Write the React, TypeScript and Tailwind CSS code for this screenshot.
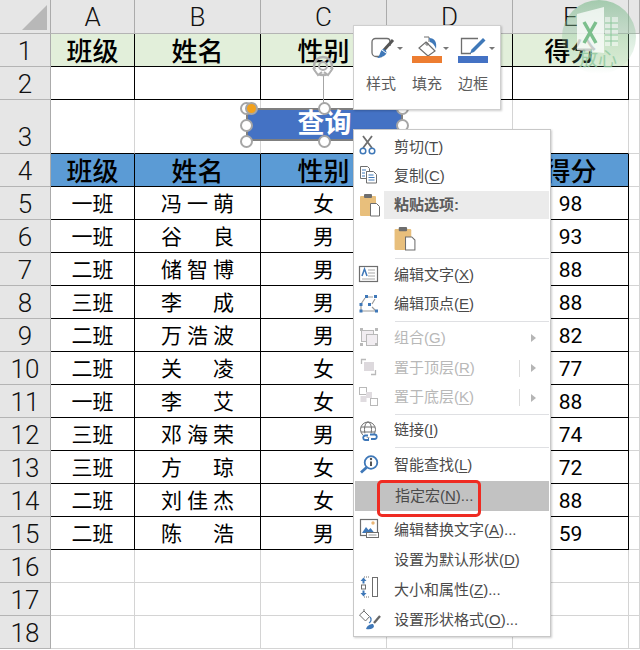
import React from "react";

const CJK = "font-['Liberation_Sans','Noto_Sans_CJK_SC',sans-serif]";

const rows: [string, string, string, string][] = [
  ["一班", "冯一萌", "女", "98"],
  ["一班", "谷良", "男", "93"],
  ["二班", "储智博", "男", "88"],
  ["三班", "李成", "男", "88"],
  ["二班", "万浩波", "男", "82"],
  ["二班", "关凌", "女", "77"],
  ["一班", "李艾", "女", "88"],
  ["三班", "邓海荣", "男", "74"],
  ["三班", "方琼", "女", "72"],
  ["二班", "刘佳杰", "女", "88"],
  ["二班", "陈浩", "男", "59"],
];

function HeadCell({ children, tall, top }: { children?: React.ReactNode; tall?: boolean; top?: boolean }) {
  return (
    <div className={`flex justify-center bg-[#e6e6e6] border-r border-b border-r-[#ababab] border-b-[#b4b4b4] font-['Roboto','Noto_Sans_CJK_SC',sans-serif] font-light text-[26px] text-[#111] leading-[32px] ${tall ? "items-end" : "items-center"} ${top ? "" : "pt-[2px]"}`}>
      {children}
    </div>
  );
}

function Cell({ children, kind }: { children?: React.ReactNode; kind: "black" | "green" | "blue" | "open" | "plain" }) {
  const map = {
    black: "bg-white border-r-black border-b-black pt-[2px]",
    green: "bg-[#e2efda] border-r-black border-b-black font-medium text-[26px] pt-[3px]",
    blue: "bg-[#5b9bd5] border-r-black border-b-black font-medium text-[26px] pt-[3px]",
    open: "bg-white border-r-[#d4d4d4] border-b-black",
    plain: "bg-white border-r-[#d4d4d4] border-b-[#d4d4d4]",
  };
  return (
    <div className={`flex items-center justify-center border-r border-b font-['Roboto','Noto_Sans_CJK_SC',sans-serif] text-black text-[21px] leading-none ${map[kind]}`}>
      {children}
    </div>
  );
}

function Name({ v }: { v: string }) {
  return (
    <span className="flex w-[73px] justify-between">
      {v.split("").map((c, i) => (
        <span key={i}>{c}</span>
      ))}
    </span>
  );
}

function Handle({ x, y }: { x: string; y: string }) {
  return <div className={`absolute w-[13px] h-[13px] rounded-full bg-white border-2 border-[#a6a6a6] ${x} ${y}`} />;
}

const G = "#6e6e6e";
const B = "#3f78b8";
const L = "#b9b9b9";

function Ico({ children }: { children: React.ReactNode }) {
  return (
    <svg width="30" height="30" viewBox="0 0 30 30" fill="none" className="absolute left-0 top-0">
      {children}
    </svg>
  );
}

const PasteShape = () => (
  <g>
    <rect x="0" y="2" width="16" height="20" fill="#e8bf7c" rx="1" />
    <rect x="4" y="0" width="8" height="4" fill="#6e6e6e" rx="1" />
    <path d="M10.5 9.5h6l3 3v9.5h-9z" fill="#fff" stroke="#6e6e6e" />
  </g>
);

const icons: Record<string, React.ReactNode> = {
  cut: (
    <Ico>
      <path d="M9 4l9 12M18 4L9 16" stroke={G} strokeWidth="1.8" />
      <circle cx="9" cy="19" r="2.8" stroke={B} strokeWidth="1.5" />
      <circle cx="18" cy="19" r="2.8" stroke={B} strokeWidth="1.5" />
    </Ico>
  ),
  copy: (
    <Ico>
      <path d="M6.5 4.500h7l2 2v3h-3v7h-6z" fill="#fff" stroke={G} />
      <path d="M12.500 9.500h7l3 3v8.500h-10z" fill="#fff" stroke={G} />
      <path d="M8 8h4M8 11h3M8 14h3" stroke={B} />
      <path d="M14.500 13h5M14.500 15.500h6M14.500 18h6" stroke={B} />
    </Ico>
  ),
  text: (
    <Ico>
      <rect x="5.500" y="6.500" width="18" height="15" stroke={G} strokeWidth="1.200" fill="#fff" />
      <path d="M8 16l2.500-7 2.500 7" stroke={B} strokeWidth="1.500" />
      <path d="M14 10h7M14 13h7M14 16h7M8 19h13" stroke="#a9a9a9" />
    </Ico>
  ),
  vertex: (
    <Ico>
      <path d="M7 16v5h15M7 14l4-6M13 7h6M21 9l-3 5M18 17l3 3" stroke="#9a9a9a" strokeWidth="1.200" />
      <rect x="5.500" y="13" width="3" height="3" fill={B} />
      <rect x="11" y="5" width="3" height="3" fill={B} />
      <rect x="20" y="5" width="3" height="3" fill={B} />
      <rect x="14" y="13" width="3" height="3" fill={B} />
      <rect x="5.500" y="19.500" width="3" height="3" fill={B} />
      <rect x="21" y="19.500" width="3" height="3" fill={B} />
    </Ico>
  ),
  group: (
    <Ico>
      <rect x="7.500" y="7.500" width="12" height="11" stroke={L} fill="#f1edf1" />
      <rect x="12.500" y="11.500" width="11" height="11" stroke={L} fill="#f1edf1" />
      <rect x="6" y="5" width="3" height="3" fill={L} />
      <rect x="21" y="5" width="3" height="3" fill={L} />
      <rect x="6" y="20" width="3" height="3" fill={L} />
      <rect x="21" y="20" width="3" height="3" fill={L} />
    </Ico>
  ),
  front: (
    <Ico>
      <path d="M12 6.500H7.500V11M17 21.500h4.500V17" stroke={L} strokeWidth="1.300" />
      <rect x="10" y="9" width="10" height="9" fill="#ddd9dd" />
    </Ico>
  ),
  back: (
    <Ico>
      <rect x="5.500" y="4.500" width="7" height="7" stroke={L} fill="#fff" />
      <rect x="12" y="9" width="6" height="6" fill="#e0dce0" />
      <rect x="6.500" y="13" width="6" height="6" fill="#e0dce0" />
      <rect x="16.500" y="15.500" width="7" height="7" stroke={L} fill="#fff" />
    </Ico>
  ),
  link: (
    <Ico>
      <circle cx="14" cy="13.500" r="7.500" stroke={G} />
      <ellipse cx="14" cy="13.500" rx="3.500" ry="7.500" stroke={G} />
      <path d="M7 11h14M7 16h14" stroke={G} />
      <rect x="10" y="19" width="9" height="5" rx="2.500" stroke="#fff" strokeWidth="4" />
      <path d="M14 19.500h-3a2.300 2.300 0 0 0 0 4.500h4M15 23h-1M16 18.500h5a2.300 2.300 0 0 1 0 4.500h-4" stroke={B} strokeWidth="1.800" />
    </Ico>
  ),
  info: (
    <Ico>
      <circle cx="17" cy="13.500" r="6.300" stroke={B} strokeWidth="1.800" />
      <path d="M12.500 18.500L7 23.500" stroke={B} strokeWidth="2.800" />
      <path d="M17 12.500v4.500" stroke="#555" strokeWidth="2" />
      <circle cx="17" cy="10" r="1.200" fill="#555" />
    </Ico>
  ),
  alt: (
    <Ico>
      <rect x="6.500" y="4.500" width="17" height="16" stroke={G} strokeWidth="1.200" fill="#fff" />
      <path d="M8 18l4-6 2.500 3 2-2 4 5z" fill={B} />
      <circle cx="19" cy="8" r="1.700" fill="#eab676" />
      <rect x="12.500" y="17.500" width="12" height="5" stroke={G} fill="#fff" />
      <path d="M14.500 20h8" stroke="#999" />
    </Ico>
  ),
  size: (
    <Ico>
      <rect x="18.500" y="2.500" width="5" height="19" stroke={G} fill="#fff" />
      <path d="M10 2h6M10 22h6" stroke={G} strokeDasharray="1 1" />
      <path d="M9.500 2.500l-3 3.500h2v2.500h2V6h2zM9.500 21.500l-3-3.500h2v-2.500h2V18h2z" fill={B} />
      <rect x="7.500" y="10" width="4" height="4" stroke={G} />
    </Ico>
  ),
  format: (
    <Ico>
      <path d="M5.500 10l4.500-4 5.500 5.500-4 4.500z" fill="#fff" stroke={G} />
      <path d="M10 6v-2" stroke={G} />
      <path d="M16 12c2 2 1 5-1 6" stroke={B} strokeWidth="1.300" />
      <path d="M26 11l-6 7" stroke="#666" strokeWidth="2.300" />
      <path d="M12 24c1-4 5-5 7-5l1 2c0 2-3 4-8 3z" fill={B} />
    </Ico>
  ),
};

function Label({ a, u, b, off }: { a: string; u: string; b: string; off?: boolean }) {
  return (
    <span className={`mb-[2px] text-[15px] leading-none whitespace-nowrap ${off ? "text-[#b8b8b8]" : "text-[#4a4a4a]"}`}>
      {a}(<span className="underline underline-offset-2">{u}</span>){b}
    </span>
  );
}

function Item({
  h,
  icon,
  a,
  u,
  b = "",
  off,
  sub,
  tick,
  active,
}: {
  h: string;
  icon?: string;
  a: string;
  u: string;
  b?: string;
  off?: boolean;
  sub?: boolean;
  tick?: boolean;
  active?: boolean;
}) {
  return (
    <div className={`relative flex items-center pl-[40px] ${h} ${active ? "bg-[#c2c2c2] mr-px ml-px pl-[39px]" : ""}`}>
      {icon ? icons[icon] : null}
      <Label a={a} u={u} b={b} off={off} />
      {tick ? <div className="ml-auto mr-[11px] h-[17px] w-px bg-[#dcdcdc]" /> : null}
      {sub ? (
        <div className={`${tick ? "" : "ml-auto"} mr-[14px] h-0 w-0 border-y-[4px] border-l-[5px] border-y-transparent border-l-[#b5b5b5]`} />
      ) : null}
    </div>
  );
}

function Sep({ h = "h-[3px]" }: { h?: string }) {
  return (
    <div className={`${h} flex items-center pl-[41px] pr-[1px]`}>
      <div className="h-px w-full bg-[#dfe0e3]" />
    </div>
  );
}

function ToolBtn({ label, children }: { label: string; children: React.ReactNode }) {
  return (
    <div className="flex w-[46px] flex-col items-center">
      <svg width="46" height="28" viewBox="0 0 46 28" fill="none">
        {children}
        <path d="M39 11h6l-3 3z" fill="#777" />
      </svg>
      <span className="mt-[11px] text-[15px] leading-[18px] text-[#5c5c5c]">{label}</span>
    </div>
  );
}

export default function App() {
  const cols = ["A", "B", "C", "D", "E", ""];
  return (
    <div className={`relative h-[650px] w-[640px] overflow-hidden bg-white ${CJK}`}>
      <div className="grid grid-cols-[51px_84px_126px_126px_126px_116px_11px] grid-rows-[34px_33px_33px_54px_repeat(15,33px)]">
        <div className="relative bg-[#e6e6e6] border-r border-b border-r-[#ababab] border-b-[#b4b4b4]">
          <svg width="50" height="33" className="absolute left-0 top-0">
            <path d="M47 5v25H22z" fill="#b8b8b8" />
          </svg>
        </div>
        {cols.map((c, i) => (
          <HeadCell key={i} top>{c}</HeadCell>
        ))}

        <HeadCell>1</HeadCell>
        <Cell kind="green">班级</Cell>
        <Cell kind="green">姓名</Cell>
        <Cell kind="green">性别</Cell>
        <Cell kind="green" />
        <Cell kind="green">得分</Cell>
        <Cell kind="plain" />

        <HeadCell>2</HeadCell>
        <Cell kind="black" />
        <Cell kind="black" />
        <Cell kind="black" />
        <Cell kind="black" />
        <Cell kind="black" />
        <Cell kind="plain" />

        <HeadCell tall>3</HeadCell>
        <Cell kind="open" />
        <Cell kind="open" />
        <Cell kind="open" />
        <Cell kind="open" />
        <Cell kind="open" />
        <Cell kind="plain" />

        <HeadCell>4</HeadCell>
        <Cell kind="blue">班级</Cell>
        <Cell kind="blue">姓名</Cell>
        <Cell kind="blue">性别</Cell>
        <Cell kind="blue" />
        <Cell kind="blue">得分</Cell>
        <Cell kind="plain" />

        {rows.map((r, i) => (
          <React.Fragment key={i}>
            <HeadCell>{i + 5}</HeadCell>
            <Cell kind="black">{r[0]}</Cell>
            <Cell kind="black">
              <Name v={r[1]} />
            </Cell>
            <Cell kind="black">{r[2]}</Cell>
            <Cell kind="black" />
            <Cell kind="black">{r[3]}</Cell>
            <Cell kind="plain" />
          </React.Fragment>
        ))}

        {[16, 17, 18].map((n) => (
          <React.Fragment key={n}>
            <HeadCell>{n}</HeadCell>
            <Cell kind="plain" />
            <Cell kind="plain" />
            <Cell kind="plain" />
            <Cell kind="plain" />
            <Cell kind="plain" />
            <Cell kind="plain" />
          </React.Fragment>
        ))}
      </div>

      {/* watermark */}
      <svg width="80" height="80" viewBox="0 0 80 80" className="absolute left-[560px] top-0" fill="none">
        <defs>
          <linearGradient id="wm" x1="0" y1="0" x2="0" y2="1">
            <stop offset="0" stopColor="#6db37f" stopOpacity="0.55" />
            <stop offset="0.8" stopColor="#9fd0a9" stopOpacity="0.2" />
            <stop offset="1" stopColor="#9fd0a9" stopOpacity="0" />
          </linearGradient>
        </defs>
        <circle cx="39" cy="37" r="37" fill="url(#wm)" />
        <path d="M17 14l27-7v46l-27-3z" fill="#fff" fillOpacity="0.75" />
        <path d="M24 22l12 21M36 22L24 43" stroke="#7cbf8d" strokeWidth="3.500" />
        <path d="M45 17h13v29H45z" fill="#fff" fillOpacity="0.5" />
        <path d="M45 23h13M45 29h13M45 35h13M45 41h13M51 17v29" stroke="#8cc79b" />
      </svg>
      <div className="absolute left-[579px] top-[50px] text-[19px] leading-none text-[#8fc9a0] opacity-80">放心</div>

      {/* shape */}
      <div className="absolute left-[246px] top-[108px] flex h-[33px] w-[157px] items-center justify-center border-2 border-[#7f7f7f] bg-[#4472c4] text-[27px] font-bold leading-none text-white">
        查询
      </div>
      <div className="absolute left-[323px] top-[76px] h-[28px] w-px bg-[#a6a6a6]" />
      <svg width="28" height="28" viewBox="0 0 28 28" fill="none" className="absolute left-[309px] top-[53px]">
        <circle cx="14" cy="13" r="9" stroke="#b0b0b0" strokeWidth="2.500" />
        <circle cx="14" cy="13" r="4" stroke="#b0b0b0" strokeWidth="2" />
        <path d="M4 15l5 7 4-3M24 15l-5 7-4-3" stroke="#b0b0b0" strokeWidth="2" fill="#fff" />
      </svg>
      <Handle x="left-[240px]" y="top-[102px]" />
      <Handle x="left-[318px]" y="top-[102px]" />
      <Handle x="left-[396px]" y="top-[102px]" />
      <Handle x="left-[240px]" y="top-[119px]" />
      <Handle x="left-[396px]" y="top-[119px]" />
      <Handle x="left-[240px]" y="top-[135px]" />
      <Handle x="left-[318px]" y="top-[135px]" />
      <Handle x="left-[396px]" y="top-[135px]" />
      <div className="absolute left-[245px] top-[102px] h-[13px] w-[13px] rounded-full border-2 border-[#a6a6a6] bg-[#f2a11c]" />

      {/* mini toolbar */}
      <div className="absolute left-[353px] top-[25px] flex h-[85px] w-[148px] border border-[#cfcfcf] bg-white pl-[4px] pt-[10px] shadow-[1px_1px_2px_rgba(0,0,0,0.2)]">
        <ToolBtn label="样式">
          <path d="M24 20.500h-6a4 4 0 0 1-4-4V6a3.500 3.500 0 0 1 3.500-3.500H29a3 3 0 0 1 3 3V10" stroke={G} strokeWidth="1.300" />
          <path d="M35 4L26 14" stroke="#555" strokeWidth="3" />
          <path d="M25 13c3 0 4 3 3 5s-6 4-9 4c3-1 3-8 6-9z" fill={B} />
          <path d="M24 14l4 3" stroke="#fff" />
        </ToolBtn>
        <ToolBtn label="填充">
          <path d="M22 6l9 9-7 5-9-8z" fill="#fff" stroke={G} strokeWidth="1.200" />
          <path d="M20 1h5v5" stroke={G} />
          <circle cx="23" cy="8" r="1.200" stroke={G} />
          <path d="M25 2c6 0 8 4 7 11-1-3-3-6-6-7z" fill={B} />
          <rect x="8" y="20" width="30" height="7" fill="#ed7d31" />
        </ToolBtn>
        <ToolBtn label="边框">
          <path d="M28 2.500H11.500v15H21" stroke={G} strokeWidth="1.300" />
          <path d="M33 2l2.500 2.500L24 16l-4 1.500 1.500-4z" fill={B} />
          <rect x="8" y="20" width="30" height="7" fill="#4472c4" />
        </ToolBtn>
      </div>

      {/* context menu */}
      <div className="absolute left-[353px] top-[129px] h-[508px] w-[198px] border border-[#c8c8c8] bg-white pt-[2px] shadow-[1px_1px_2px_rgba(0,0,0,0.2)]">
        <Item h="h-[30px]" icon="cut" a="剪切" u="T" />
        <Item h="h-[29px]" icon="copy" a="复制" u="C" />
        <div className="relative h-[28px] pl-[30px]">
          <svg width="26" height="26" viewBox="-6 -3 26 26" className="absolute left-0 top-0" fill="none">
            <PasteShape />
          </svg>
          <div className="flex h-full items-center bg-[#ebebeb] pl-[10px] pb-[2px] text-[15px] font-bold text-[#5c5c5c] leading-none mr-px">粘贴选项:</div>
        </div>
        <div className="h-[37px] pl-[40px] pt-[8px]">
          <svg width="22" height="24" viewBox="0 0 20 23" fill="none">
            <PasteShape />
          </svg>
        </div>
        <Sep h="h-[4px]" />
        <Item h="h-[30px]" icon="text" a="编辑文字" u="X" />
        <Item h="h-[29px]" icon="vertex" a="编辑顶点" u="E" />
        <Sep h="h-[4px]" />
        <Item h="h-[30px]" icon="group" a="组合" u="G" off sub />
        <Item h="h-[30px]" icon="front" a="置于顶层" u="R" off sub tick />
        <Item h="h-[29px]" icon="back" a="置于底层" u="K" off sub tick />
        <Sep h="h-[4px]" />
        <Item h="h-[29px]" icon="link" a="链接" u="I" />
        <Sep h="h-[4px]" />
        <Item h="h-[32px]" icon="info" a="智能查找" u="L" />
        <Item h="h-[30px]" a="指定宏" u="N" b="..." active />
        <div className="h-[4px]" />
        <Item h="h-[30px]" icon="alt" a="编辑替换文字" u="A" b="..." />
        <Item h="h-[30px]" a="设置为默认形状" u="D" />
        <Item h="h-[30px]" icon="size" a="大小和属性" u="Z" b="..." />
        <Item h="h-[30px]" icon="format" a="设置形状格式" u="O" b="..." />
      </div>

      {/* red highlight */}
      <div className="absolute left-[377px] top-[480px] h-[37px] w-[104px] rounded-[5px] border-[3px] border-[#ef2b22]" />
    </div>
  );
}
